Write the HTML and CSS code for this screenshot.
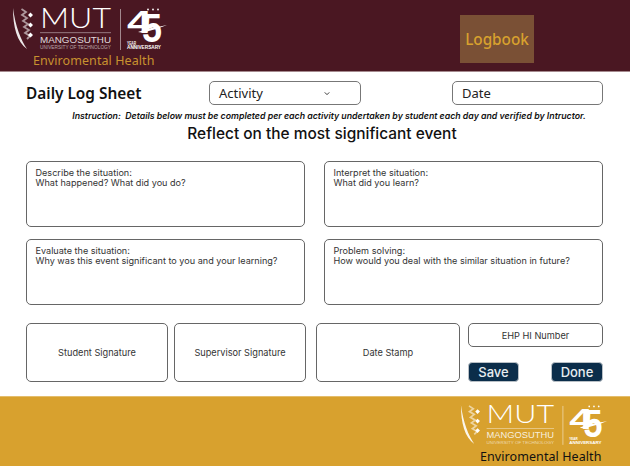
FILE: index.html
```html
<!DOCTYPE html>
<html lang="en">
<head>
<meta charset="utf-8">
<title>Daily Log Sheet</title>
<link rel="stylesheet" href="styles.css">
</head>
<body>
<svg class="defs" width="0" height="0" aria-hidden="true">
  <symbol id="mut-logo" viewBox="0 0 160 50">
    <path d="M1 1 C1 20 5 35 15 42 C9 33 3.500 20 1 1Z" fill="#fff" fill-opacity=".9"/>
    <path d="M9.500 2 L14 5 L10 8 L15 11 L11 14 L16 17 L12 20 L17 23 L13 26 L18 29 L15 32" fill="none" stroke="#fff" stroke-opacity=".55" stroke-width="1.800"/>
    <path d="M18.500 5.500l2.500 2.500-2.500 2.500-2.500-2.500zM18.500 15.500l2.500 2.500-2.500 2.500-2.500-2.500zM18.500 25.500l2.500 2.500-2.500 2.500-2.500-2.500z" fill="#fff"/>
    <text class="logo-mut" x="28" y="20.500" textLength="71" lengthAdjust="spacingAndGlyphs">MUT</text>
    <rect x="28" y="25.500" width="71" height=".6" fill="#fff" fill-opacity=".7"/>
    <text class="logo-name" x="28" y="36" textLength="71" lengthAdjust="spacingAndGlyphs">MANGOSUTHU</text>
    <text class="logo-sub" x="28" y="42" textLength="71" lengthAdjust="spacingAndGlyphs">UNIVERSITY OF TECHNOLOGY</text>
    <rect x="108" y="2" width=".7" height="41" fill="#fff" fill-opacity=".7"/>
    <text class="logo-four" x="115" y="26" textLength="25" lengthAdjust="spacingAndGlyphs">4</text>
    <text class="logo-five" x="130" y="35" textLength="20" lengthAdjust="spacingAndGlyphs">5</text>
    <path d="M126 25 C136 21 146 20 155 18 C146 22 138 23 132 26Z" fill="#fff"/>
    <circle cx="136" cy="2.500" r=".9" fill="#fff"/><circle cx="141" cy="2.500" r=".9" fill="#fff"/><circle cx="146" cy="2.500" r=".9" fill="#fff"/>
    <text class="logo-tiny" x="115" y="37.500" textLength="9" lengthAdjust="spacingAndGlyphs">YEAR</text>
    <text class="logo-tiny" x="115" y="42" textLength="34" lengthAdjust="spacingAndGlyphs">ANNIVERSARY</text>
  </symbol>
</svg>

<header class="top">
  <div class="brand">
    <svg class="logo"><use href="#mut-logo"/></svg>
    <div class="brand-name">Enviromental Health</div>
  </div>
  <div class="logbook">Logbook</div>
</header>

<main class="sheet">
  <div class="title-row">
    <h1 class="title">Daily Log Sheet</h1>
    <div class="field field-activity">
      <span>Activity</span>
      <svg class="chev" viewBox="0 0 8 6" width="6" height="5"><path d="M1 1.500 L4 4.500 L7 1.500" fill="none" stroke="#222" stroke-width="1.200"/></svg>
    </div>
    <div class="field field-date"><span>Date</span></div>
  </div>
  <p class="instruction">Instruction:&nbsp; Details below must be completed per each activity undertaken by student each day and verified by Intructor.</p>
  <h2 class="heading">Reflect on the most significant event</h2>

  <div class="prompts">
    <div class="box prompt">Describe the situation:<br>What happened? What did you do?</div>
    <div class="box prompt">Interpret the situation:<br>What did you learn?</div>
    <div class="box prompt">Evaluate the situation:<br>Why was this event significant to you and your learning?</div>
    <div class="box prompt">Problem solving:<br>How would you deal with the similar situation in future?</div>
  </div>

  <div class="sign-row">
    <div class="box sign sign-student">Student Signature</div>
    <div class="box sign sign-super">Supervisor Signature</div>
    <div class="box sign sign-stamp">Date Stamp</div>
    <div class="side">
      <div class="box hi-number">EHP HI Number</div>
      <div class="actions">
        <button class="btn btn-save">Save</button>
        <button class="btn btn-done">Done</button>
      </div>
    </div>
  </div>
</main>

<footer class="bottom">
  <div class="brand brand-foot">
    <svg class="logo logo-foot"><use href="#mut-logo"/></svg>
    <div class="brand-name brand-name-foot">Enviromental Health</div>
  </div>
</footer>
</body>
</html>
```
FILE: styles.css
```css
* { box-sizing: border-box; }
html, body { margin: 0; padding: 0; }
body {
  width: 630px;
  height: 466px;
  background: #fff;
  font-family: Inter, "Liberation Sans", sans-serif;
  color: #222;
  overflow: hidden;
  display: flex;
  flex-direction: column;
}
.defs { display: block; height: 0; }

.top {
  height: 72px;
  flex: none;
  background: #4a1722;
  border-bottom: 1px solid #a58a8e;
  display: flex;
  align-items: flex-start;
  padding: 7px 0 0 12px;
}
.brand { display: flex; flex-direction: column; }
.logo { display: block; width: 160px; height: 50px; }
.brand-name {
  font-family: "Noto Sans", sans-serif;
  font-size: 12.500px;
  line-height: 16px;
  letter-spacing: .08px;
  color: #c8922f;
  margin: -4px 0 0 21px;
}
.logbook {
  width: 74px;
  height: 48px;
  margin: 8px 0 0 288px;
  background: #7a5035;
  color: #d8a12e;
  font-family: "Noto Sans", sans-serif;
  font-size: 15.300px;
  font-weight: 500;
  display: flex;
  align-items: center;
  justify-content: center;
}

.logo-mut { font-family: Lato, sans-serif; font-weight: 300; font-size: 27px; fill: #fff; }
.logo-name { font-family: "Liberation Sans", sans-serif; font-size: 9px; fill: #fff; fill-opacity: .85; }
.logo-sub { font-family: "Liberation Sans", sans-serif; font-size: 4.500px; fill: #fff; fill-opacity: .6; }
.logo-four { font-family: "Liberation Sans", sans-serif; font-weight: 700; font-size: 32px; fill: #fff; }
.logo-five { font-family: "Liberation Sans", sans-serif; font-weight: 700; font-size: 40px; fill: #fff; }
.logo-tiny { font-family: "Liberation Sans", sans-serif; font-weight: 700; font-size: 4.500px; fill: #fff; }

.sheet {
  flex: 1;
  padding: 9px 26px 0;
  display: flex;
  flex-direction: column;
}
.title-row { display: flex; align-items: center; height: 24px; }
.title {
  margin: 0;
  padding-top: 1px;
  width: 183px;
  font-family: "Noto Sans", sans-serif;
  font-size: 15.400px;
  font-weight: 600;
  color: #111;
  white-space: nowrap;
}
.field {
  height: 24px;
  border: 1px solid #777;
  border-radius: 5px;
  font-family: "Noto Sans", sans-serif;
  font-size: 13px;
  display: flex;
  align-items: center;
  padding-left: 9px;
}
.field-activity { width: 152px; }
.field-date { width: 151px; margin-left: 91px; }
.chev { margin-left: 61px; }

.instruction {
  margin: 4px 0 0;
  padding-left: 28px;
  text-align: center;
  font-size: 8.770px;
  line-height: 14px;
  font-weight: 600;
  font-style: italic;
  color: #111;
  white-space: nowrap;
}
.heading {
  margin: 0;
  padding-left: 14px;
  text-align: center;
  font-size: 15.450px;
  line-height: 22px;
  font-weight: 500;
  color: #111;
}

.box {
  border: 1px solid #666;
  border-radius: 5px;
  background: #fff;
}
.prompts {
  margin-top: 16px;
  display: grid;
  grid-template-columns: 279px 279px;
  grid-template-rows: 66px 66px;
  column-gap: 19px;
  row-gap: 12px;
}
.prompt {
  padding: 6px 8.500px;
  font-size: 9.100px;
  line-height: 10px;
  color: #333;
}

.sign-row {
  margin-top: 18px;
  display: flex;
  height: 59px;
}
.sign {
  display: flex;
  align-items: center;
  justify-content: center;
  font-size: 9.200px;
  color: #333;
}
.sign-student { width: 142px; }
.sign-super { width: 132px; margin-left: 6px; }
.sign-stamp { width: 144px; margin-left: 10px; }
.side { width: 135px; margin-left: 8px; display: flex; flex-direction: column; }
.hi-number {
  height: 24px;
  display: flex;
  align-items: center;
  justify-content: center;
  font-size: 9.200px;
  color: #333;
}
.actions {
  margin-top: 15px;
  display: flex;
  justify-content: space-between;
}
.btn {
  height: 20px;
  width: 51px;
  padding: 0;
  border: 1px solid #b9c0c6;
  border-radius: 4px;
  background: #0b2d4a;
  color: #e8edf1;
  font-family: Inter, sans-serif;
  font-size: 13px;
  font-weight: 500;
  line-height: 18px;
}
.btn-done { width: 52px; }

.bottom {
  height: 70px;
  flex: none;
  background: #d8a12e;
  border-top: 1px solid #e4bd6c;
  display: flex;
  justify-content: flex-end;
  padding: 7px 18px 0 0;
}
.logo-foot { width: 152px; height: 47.500px; }
.brand-name-foot {
  color: #111;
  margin: -3px 0 0 20px;
}
```
